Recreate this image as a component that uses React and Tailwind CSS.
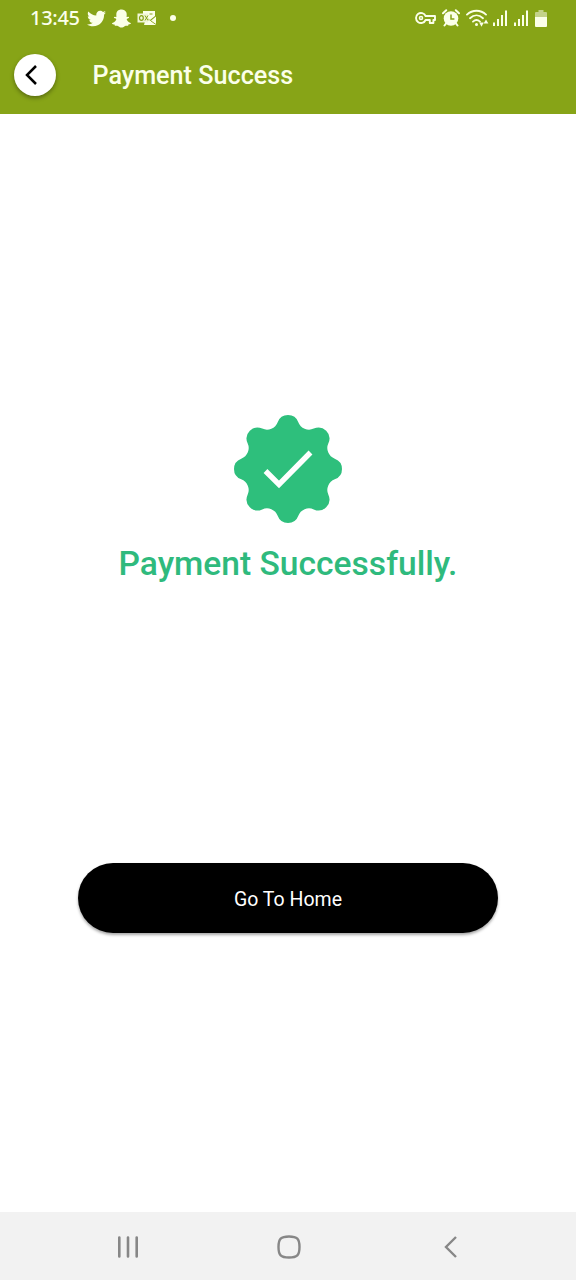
import React from 'react';
import { FaTwitter, FaSnapchatGhost } from 'react-icons/fa';

// Outline of the scalloped badge: eight round lobes joined by concave arcs.
function badgePath() {
  const lobeDist = 43, lobeR = 11, dentDist = 54.85, dentR = 11.35;
  const at = (d, a) => [54 + d * Math.cos(a), 54 + d * Math.sin(a)];
  const joint = (lobe, dent) => {
    const t = lobeR / (lobeR + dentR);
    return [lobe[0] + (dent[0] - lobe[0]) * t, lobe[1] + (dent[1] - lobe[1]) * t];
  };
  const fmt = (p) => p.map((n) => n.toFixed(2)).join(' ');
  let d = '';
  for (let i = 0; i < 8; i++) {
    const a = (i * Math.PI) / 4;
    const lobe = at(lobeDist, a);
    const next = at(lobeDist, a + Math.PI / 4);
    const before = at(dentDist, a - Math.PI / 8);
    const after = at(dentDist, a + Math.PI / 8);
    if (i === 0) d += `M${fmt(joint(lobe, before))}`;
    d += `A${lobeR} ${lobeR} 0 0 1 ${fmt(joint(lobe, after))}`;
    d += `A${dentR} ${dentR} 0 0 0 ${fmt(joint(next, after))}`;
  }
  return d + 'Z';
}

function MailIcon() {
  return (
    <svg className="ml-[6px] h-4 w-5" viewBox="0 0 20 16" fill="none">
      <path d="M6 1h12v5l-5 4-4-3H6z" fill="#fbffe9" />
      <path d="M9 7.5l4.5 3.5L19 6.5V15H7z" fill="#fbffe9" />
      <path d="M14 11l5 3.5" stroke="#87a417" strokeWidth="0.9" />
      <path d="M0.5 3.5h10.5v9H0.5z" fill="#f1f6d8" />
      <ellipse cx="4.4" cy="8" rx="1.9" ry="2.3" stroke="#87a417" strokeWidth="1.2" />
      <path d="M8 5.5l3 5M11 5.5l-3 5M12.5 4h3" stroke="#87a417" strokeWidth="1" />
    </svg>
  );
}

function KeyIcon() {
  return (
    <svg className="h-[14px] w-[22px]" viewBox="0 0 22 14" fill="none" stroke="#fbffe9" strokeWidth="1.9">
      <path d="M10.6 5H20v4h-1.6v3h-3.6V9h-4.2A5 5 0 1 1 10.6 5z" strokeLinejoin="round" />
      <circle cx="6" cy="7" r="1.5" strokeWidth="1.6" />
    </svg>
  );
}

function AlarmIcon() {
  return (
    <svg className="ml-[5px] h-[18px] w-[18px]" viewBox="0 0 18 18" fill="none">
      <circle cx="9" cy="9.5" r="7.3" fill="#fbffe9" />
      <path d="M1 4.2L4.2 1.2M17 4.2L13.8 1.2M4 14.5L2.5 16.5M14 14.5l1.500 2" stroke="#fbffe9" strokeWidth="2" strokeLinecap="round" />
      <path d="M9 5.500v4.400h3.400" stroke="#87a417" strokeWidth="1.5" />
    </svg>
  );
}

function WifiIcon() {
  return (
    <svg className="ml-[6px] h-[18px] w-[23px]" viewBox="0 0 23 18" fill="none" stroke="#fbffe9" strokeLinecap="round">
      <path d="M1 5.600C6.400.5 14.600.5 20 5.600" strokeWidth="1.9" />
      <path d="M4 9.200C8 5.400 13 5.400 17 9.200" strokeWidth="1.9" />
      <path d="M7 12.600c2.200-2 4.800-2 7 0" strokeWidth="1.9" />
      <circle cx="10.5" cy="15.5" r="1.5" fill="#fbffe9" stroke="none" />
      <path d="M13.200 13.500h4.600l-2.300 4.300zM17.600 14.500h4.800L20 10.400z" fill="#fbffe9" stroke="none" />
    </svg>
  );
}

function SignalIcon({ className }) {
  return (
    <svg className={className} viewBox="0 0 16 18" stroke="#fbffe9" strokeWidth="2">
      <path d="M2 13.500V17M6 10V17M10 6V17M14 1.500V17" />
    </svg>
  );
}

function StatusBar() {
  return (
    <div className="flex h-9 items-center justify-between pl-[30px] pr-[29px] text-[#fbffe9]">
      <div className="flex items-center">
        <span className="w-[50px] whitespace-nowrap font-['Noto_Sans',sans-serif] text-[20px] font-medium leading-9 tracking-[-0.3px]">13:45</span>
        <FaTwitter className="ml-[7px] h-[19px] w-[19px]" />
        <FaSnapchatGhost className="ml-[6px] h-[19px] w-[19px]" />
        <MailIcon />
        <span className="ml-[13px] h-[6px] w-[6px] rounded-full bg-[#fbffe9]" />
      </div>
      <div className="flex items-center">
        <KeyIcon />
        <AlarmIcon />
        <WifiIcon />
        <SignalIcon className="ml-[3px] h-[18px] w-4" />
        <SignalIcon className="ml-[5px] h-[18px] w-4" />
        <svg className="ml-[6px] h-[17px] w-3" viewBox="0 0 12 17">
          <path d="M3.500 0h5v2H11a1 1 0 0 1 1 1v5H0V3a1 1 0 0 1 1-1h2.500z" fill="#c4d28a" />
          <path d="M0 7h12v9a1 1 0 0 1-1 1H1a1 1 0 0 1-1-1z" fill="#fbffe9" />
        </svg>
      </div>
    </div>
  );
}

export default function App() {
  return (
    <div className="flex h-[1280px] w-[576px] flex-col bg-white font-['Roboto',sans-serif]">
      <header className="h-[114px] bg-[#87a417]">
        <StatusBar />
        <div className="flex h-[78px] items-center pl-[14px]">
          <button aria-label="Back" className="flex h-[42px] w-[42px] items-center justify-center rounded-full bg-white shadow-[0_2px_4px_rgba(0,0,0,0.35)]">
            <svg className="mr-[8px] h-5 w-3" viewBox="0 0 12 20" fill="none" stroke="#000" strokeWidth="2.5">
              <path d="M11 1L2 10l9 9" />
            </svg>
          </button>
          <h1 className="ml-[36.5px] pt-[2px] text-[25.2px] font-medium leading-[30px] text-[#fbffe9]">Payment Success</h1>
        </div>
      </header>

      <main className="flex flex-1 flex-col items-center pt-[301px]">
        <svg className="h-[108px] w-[108px]" viewBox="0 0 108 108" fill="none">
          <path d={badgePath()} fill="#2ebf7c" />
          <path d="M31.500 56L45 69.500 76.500 37.500" stroke="#fff" strokeWidth="5.4" />
        </svg>
        <p className="mt-[21px] whitespace-nowrap text-[33.6px] font-medium leading-10 text-[#2fba7d]">Payment Successfully.</p>
        <button className="mt-[279px] h-[70px] w-[420px] rounded-[35px] bg-black pt-[3px] text-[19.5px] text-white shadow-[0_2px_3px_rgba(0,0,0,0.35)]">
          Go To Home
        </button>
      </main>

      <nav className="flex h-[68px] items-center bg-[#f2f2f2] pl-[116px] pt-[2px]">
        <svg className="h-6 w-6" viewBox="0 0 24 24" stroke="#878787" strokeWidth="2.6" strokeLinecap="round">
          <path d="M3.300 2.500v19M12 2.500v19M20.700 2.500v19" />
        </svg>
        <svg className="ml-[137px] h-6 w-6" viewBox="0 0 24 24" fill="none" stroke="#878787" strokeWidth="2.4">
          <path d="M12 1.500c8.200 0 10.500 2.300 10.500 10.500S20.200 22.500 12 22.500 1.500 20.200 1.500 12 3.800 1.500 12 1.500z" />
        </svg>
        <svg className="ml-[142px] h-6 w-4" viewBox="0 0 16 24" fill="none" stroke="#878787" strokeWidth="2.4">
          <path d="M13 2L3 12l10 10" />
        </svg>
      </nav>
    </div>
  );
}
